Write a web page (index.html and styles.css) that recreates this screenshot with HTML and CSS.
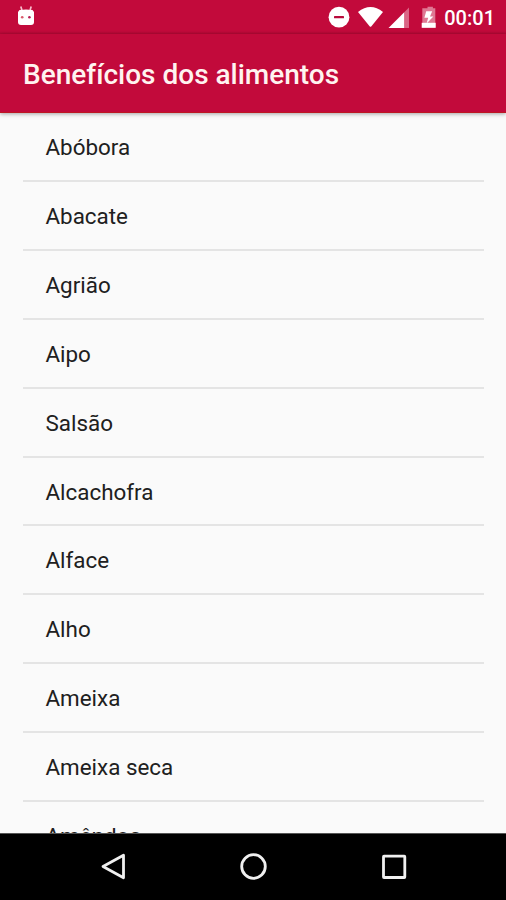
FILE: index.html
```html
<!DOCTYPE html>
<html lang="pt-BR">
<head>
<meta charset="utf-8">
<title>Benefícios dos alimentos</title>
<link rel="stylesheet" href="styles.css">
</head>
<body>
<div class="screen">
  <header class="status-bar">
    <svg class="robot" width="18" height="21" viewBox="0 0 18 21">
      <path d="M3.8 1.4 4.9 5M14.2 1.4 13.1 5" stroke="#f8bccb" stroke-width="1.7"/>
      <path d="M2.5 5Q9 4 15.5 5L17 7V17Q17 20 14 20H4Q1 20 1 17V7Z" fill="#fff"/>
      <circle cx="5.2" cy="12.2" r="1.3" fill="#d95a6c"/><circle cx="12.4" cy="12.2" r="1.3" fill="#b81e55"/>
    </svg>
    <svg class="status-icons" width="112" height="30" viewBox="0 0 112 30">
      <circle cx="12" cy="18.2" r="10.4" fill="#fff"/>
      <rect x="7" y="16.9" width="10" height="2.4" rx=".6" fill="#b80a3b"/>
      <path d="M31 13Q43.5 3.2 56 13L44.2 27.4Q43.5 28.1 42.8 27.4Z" fill="#fff"/>
      <path d="M61.5 29 77.5 13V29Z" fill="#fff"/>
      <path d="M77.5 13 82 8.5V29H77.5Z" fill="#da6585"/>
      <path d="M98 9.2h2.5V7.8h5.4v1.4h2.4V28.5h-13V9.2Z" fill="#df7893"/>
      <path d="M94.7 23.8h14v5h-14Z" fill="#fff"/>
      <path d="M105.2 12.2H99.2L97.4 18.8H101.2L99.6 24.6 106.4 17.4H103Z" fill="#fff"/>
    </svg>
    <span class="clock">00:01</span>
  </header>
  <div class="app-bar"><h1>Benefícios dos alimentos</h1></div>
  <ul class="foods">
    <li>Abóbora</li>
    <li>Abacate</li>
    <li>Agrião</li>
    <li>Aipo</li>
    <li>Salsão</li>
    <li>Alcachofra</li>
    <li>Alface</li>
    <li>Alho</li>
    <li>Ameixa</li>
    <li>Ameixa seca</li>
    <li>Amêndoa</li>
  </ul>
  <nav class="nav-bar">
    <svg width="28" height="28" viewBox="0 0 28 28"><path d="M3 13.5 23.5 2.2V24.8Z"/></svg>
    <svg width="28" height="28" viewBox="0 0 28 28"><circle cx="13.5" cy="13.5" r="11.8"/></svg>
    <svg width="28" height="28" viewBox="0 0 28 28"><rect x="3.5" y="3.2" width="21.3" height="21.3" rx=".5"/></svg>
  </nav>
</div>
</body>
</html>
```
FILE: styles.css
```css
* {
  box-sizing: border-box;
}

body {
  margin: 0;
  font-family: Roboto, "Liberation Sans", sans-serif;
}

.screen {
  display: flex;
  flex-direction: column;
  width: 506px;
  height: 900px;
  overflow: hidden;
  background: #fafafa;
}

.status-bar {
  display: flex;
  flex: none;
  height: 34px;
  padding: 0 11px 0 17px;
  background: linear-gradient(#c20a3b 31px, #b10834);
}

.robot {
  margin-top: 5px;
}

.status-icons {
  margin-top: -1px;
  margin-left: auto;
}

.clock {
  margin-left: 5px;
  color: #fff;
  font-size: 20px;
  font-weight: 500;
  line-height: 36px;
}

.app-bar {
  position: relative;
  flex: none;
  height: 79px;
  padding: 0 23px;
  background: #c20a3b;
  border-bottom: 1px solid #bd1723;
  box-shadow: 0 1px 4px rgba(0, 0, 0, .35);
}

h1 {
  margin: 0;
  color: #fff3f0;
  font-size: 28px;
  font-weight: 500;
  line-height: 82px;
  white-space: nowrap;
}

.foods {
  flex: 1;
  min-height: 0;
  margin: 0;
  padding: 0 22px 0 23px;
  overflow: hidden;
  list-style: none;
}

.foods li {
  height: 68.9px;
  padding-left: 22.5px;
  border-bottom: 2px solid #e4e4e4;
  color: #202020;
  font-size: 22.4px;
  line-height: 68px;
}

.foods li:first-child {
  height: 69px;
}

.nav-bar {
  display: flex;
  flex: none;
  justify-content: space-between;
  height: 67px;
  padding: 19px 98px 0 100px;
  background: #000;
  border-top: 1px solid #555;
}

.nav-bar svg {
  fill: none;
  stroke: #f0f0f0;
  stroke-width: 2.8;
  stroke-linejoin: round;
}
```
